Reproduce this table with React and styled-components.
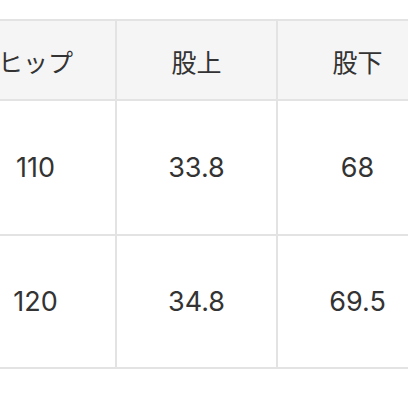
import styled, { createGlobalStyle } from "styled-components";

const GlobalStyle = createGlobalStyle`
  html, body {
    margin: 0;
    padding: 0;
    background: #ffffff;
  }
`;

const Page = styled.div`
  width: 408px;
  height: 408px;
  overflow: hidden;
  background: #ffffff;
  padding-top: 19px;
  box-sizing: border-box;
`;

const Table = styled.table`
  margin-left: -46px;
  border-collapse: collapse;
  table-layout: fixed;
  width: 483px;
  color: #333333;
`;

const HeadCell = styled.th`
  width: 159px;
  height: 76px;
  padding: 2px 0 0;
  background: #f5f5f5;
  border: 2px solid #e3e3e3;
  font-family: "Noto Sans CJK JP", "Noto Sans", sans-serif;
  font-size: 25px;
  font-weight: 400;
  text-align: center;
  vertical-align: middle;
`;

const Cell = styled.td`
  height: ${(p) => p.h}px;
  padding: 0;
  border: 2px solid #e3e3e3;
  font-family: Inter, "Noto Sans", sans-serif;
  font-size: 27px;
  font-weight: 400;
  text-align: center;
  vertical-align: middle;
`;

const headers = ["ヒップ", "股上", "股下"];
const rows = [
  { h: 133, values: ["110", "33.8", "68"] },
  { h: 131, values: ["120", "34.8", "69.5"] },
];

export default function App() {
  return (
    <>
      <GlobalStyle />
      <Page>
        <Table>
          <thead>
            <tr>
              {headers.map((h) => (
                <HeadCell key={h}>{h}</HeadCell>
              ))}
            </tr>
          </thead>
          <tbody>
            {rows.map((row) => (
              <tr key={row.values[0]}>
                {row.values.map((v, i) => (
                  <Cell key={i} h={row.h}>
                    {v}
                  </Cell>
                ))}
              </tr>
            ))}
          </tbody>
        </Table>
      </Page>
    </>
  );
}
